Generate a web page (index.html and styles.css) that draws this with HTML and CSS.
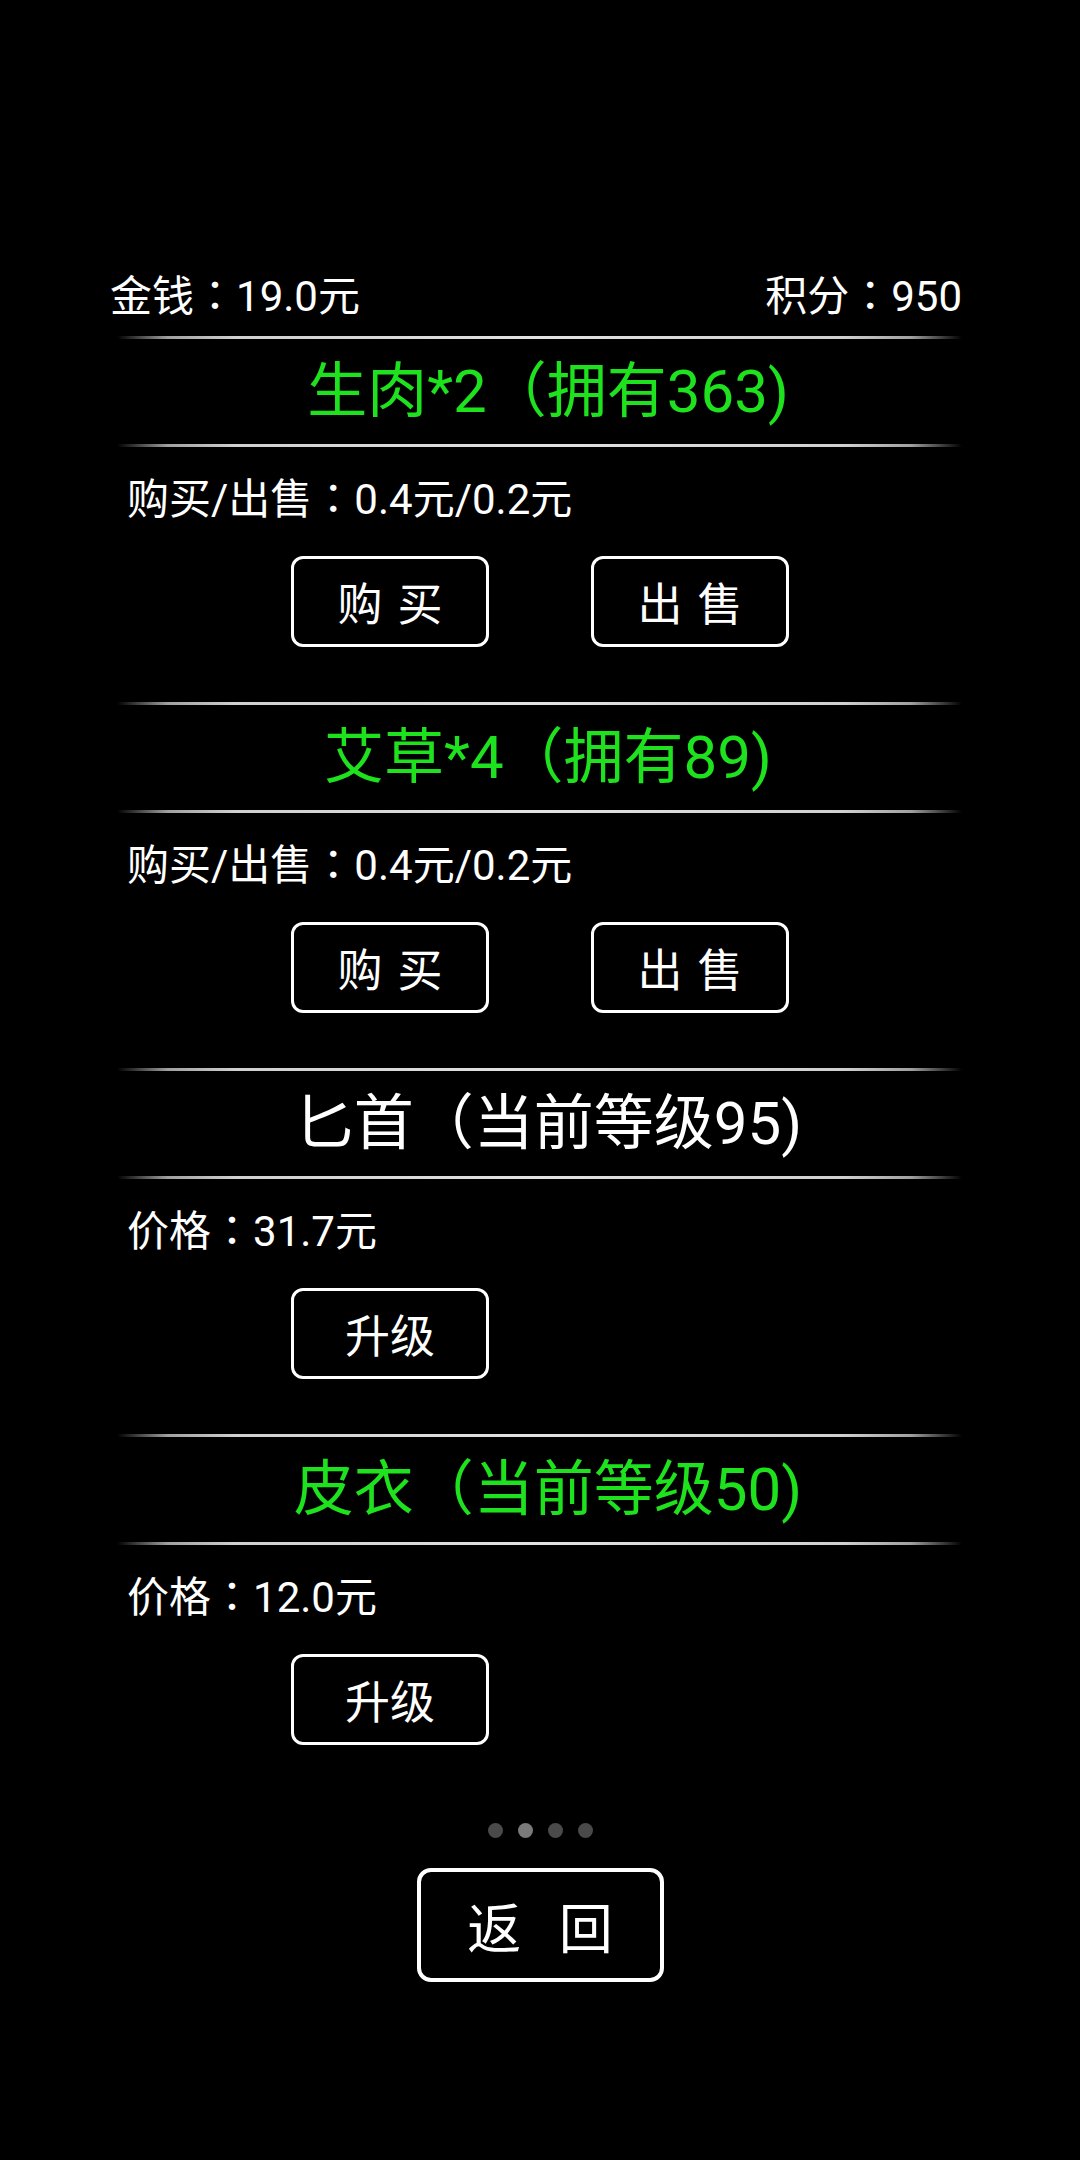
FILE: index.html
```html
<!DOCTYPE html>
<html>
<head>
  <meta charset="UTF-8">
  <title>商店</title>
  <link rel="stylesheet" href="styles.css">
</head>
<body>
<div id="shop">
    <div class="stats">
        <span>金钱<span class="colon">：</span>19.0元</span>
        <span>积分<span class="colon">：</span>950</span>
    </div>

    <div class="item">
        <div class="line"></div>
        <p class="name green">生肉*2（拥有363)</p>
        <div class="line"></div>
        <p class="price">购买/出售<span class="colon">：</span>0.4元/0.2元</p>
        <div class="btns">
            <button class="btn">购 买</button>
            <button class="btn">出 售</button>
        </div>
    </div>

    <div class="item">
        <div class="line"></div>
        <p class="name green">艾草*4（拥有89)</p>
        <div class="line"></div>
        <p class="price">购买/出售<span class="colon">：</span>0.4元/0.2元</p>
        <div class="btns">
            <button class="btn">购 买</button>
            <button class="btn">出 售</button>
        </div>
    </div>

    <div class="item">
        <div class="line"></div>
        <p class="name">匕首（当前等级95)</p>
        <div class="line"></div>
        <p class="price">价格<span class="colon">：</span>31.7元</p>
        <div class="btns">
            <button class="btn">升级</button>
        </div>
    </div>

    <div class="item last">
        <div class="line"></div>
        <p class="name green">皮衣（当前等级50)</p>
        <div class="line"></div>
        <p class="price">价格<span class="colon">：</span>12.0元</p>
        <div class="btns">
            <button class="btn">升级</button>
        </div>
    </div>

    <div class="dots">
        <span class="dot"></span>
        <span class="dot on"></span>
        <span class="dot"></span>
        <span class="dot"></span>
    </div>

    <div class="back">
        <button class="btn big">返 回</button>
    </div>
</div>
</body>
</html>
```

FILE: styles.css
```css
* {
    margin: 0;
    padding: 0;
    box-sizing: border-box;
}
body {
    background-color: #000;
    color: #fff;
    font-family: Roboto, "Noto Sans CJK SC", sans-serif;
    width: 1080px;
    height: 2160px;
}
#shop {
    padding: 263px 118px 0 110px;
}
.stats {
    display: flex;
    justify-content: space-between;
    font-size: 42px;
    line-height: 60px;
    height: 60px;
    margin-bottom: 13px;
}
/* centred full-width colon, as on the device font */
.colon {
    font-family: "Noto Sans CJK TC", sans-serif;
}
.item {
    padding-bottom: 55px;
}
.item.last {
    padding-bottom: 0;
}
.line {
    height: 3px;
    margin-left: 7px;
    background: linear-gradient(to right, rgba(200,200,200,0) 0%, #a0a0a0 6%, #d0d0d0 14%, #e2e2e2 50%, #d0d0d0 86%, #a0a0a0 94%, rgba(200,200,200,0) 100%);
}
.name {
    height: 105px;
    line-height: 105px;
    text-align: center;
    font-size: 60px;
    padding-left: 24px;
}
.green {
    color: #1ee21e;
}
.price {
    font-size: 42px;
    line-height: 60px;
    height: 60px;
    margin-top: 19px;
    padding-left: 17px;
}
.btns {
    display: grid;
    grid-template-columns: 198px 198px;
    column-gap: 102px;
    justify-content: center;
    margin-top: 30px;
    padding-left: 8px;
}
.btn {
    height: 91px;
    background-color: #000;
    color: #fff;
    border: 3px solid #fff;
    border-radius: 12px;
    font-family: Roboto, "Noto Sans CJK SC", sans-serif;
    font-size: 45px;
    word-spacing: 4px;
    outline: none;
}
.dots {
    display: flex;
    justify-content: center;
    gap: 15px;
    margin-top: 78px;
    padding-left: 8px;
}
.dot {
    width: 15px;
    height: 15px;
    border-radius: 50%;
    background-color: #4a4a4a;
}
.dot.on {
    background-color: #7a7a7a;
}
.back {
    display: flex;
    justify-content: center;
    margin-top: 30px;
    padding-left: 8px;
}
.btn.big {
    width: 247px;
    height: 114px;
    border-width: 4px;
    border-radius: 14px;
    font-size: 54px;
    word-spacing: 24px;
}
```
